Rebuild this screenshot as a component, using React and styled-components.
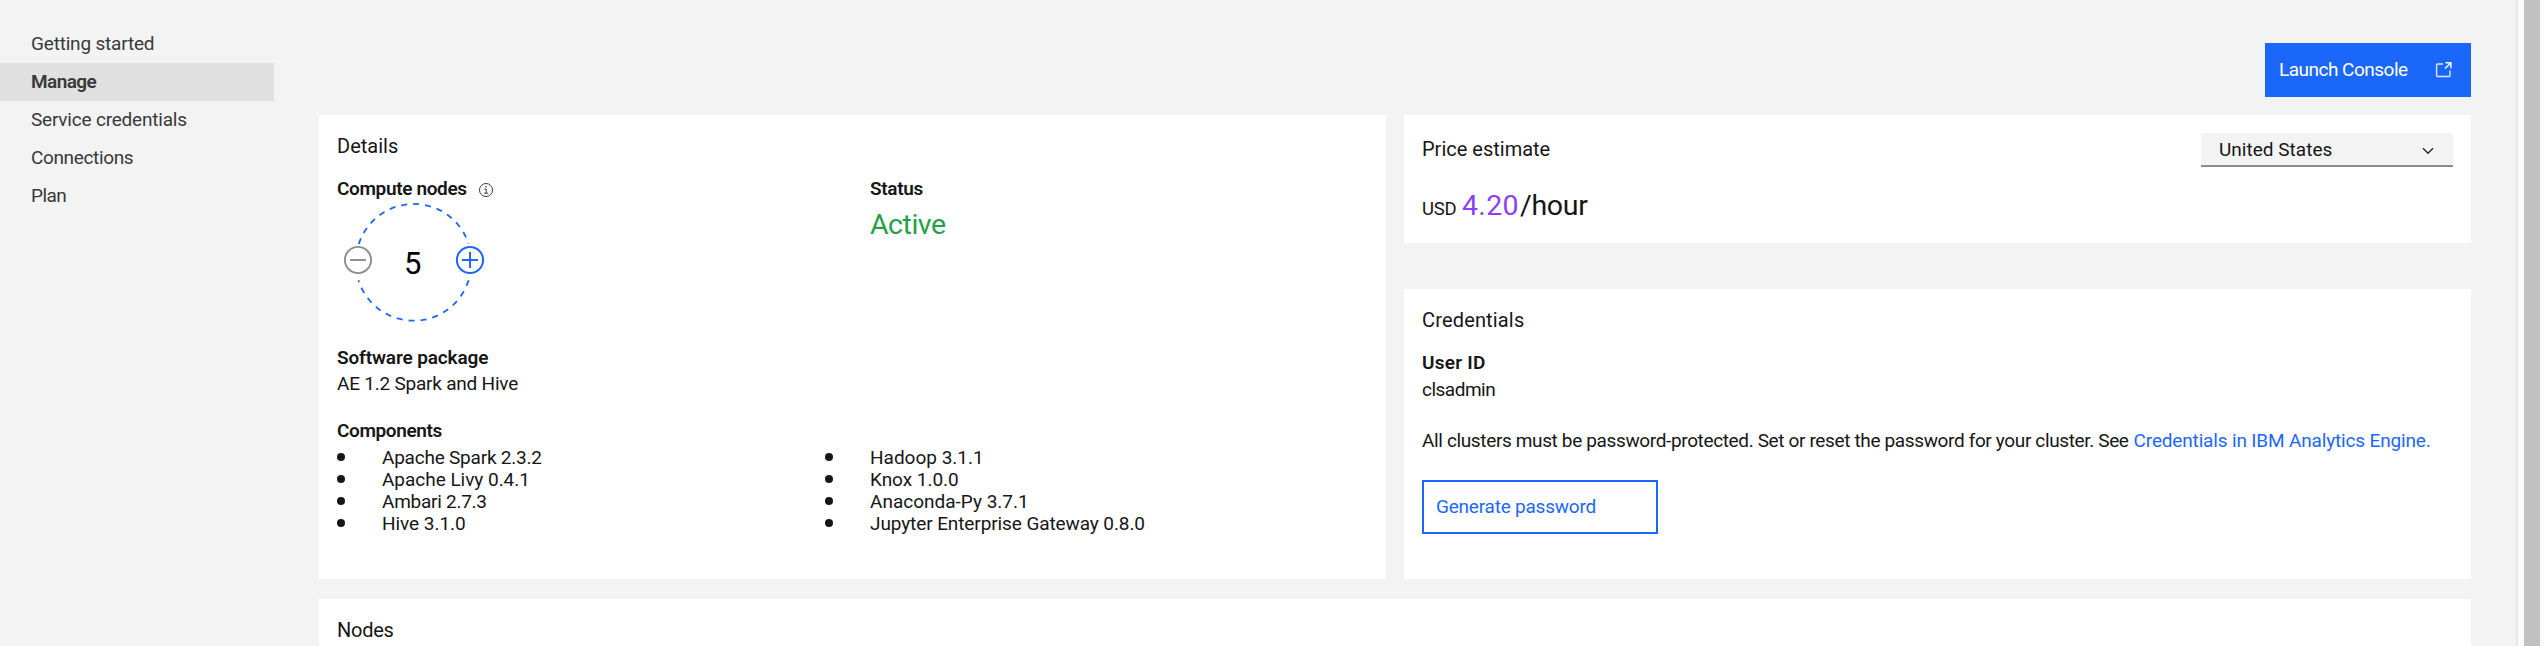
import React from "react";
import styled, { createGlobalStyle } from "styled-components";

const GlobalStyle = createGlobalStyle`
  * { box-sizing: border-box; }
  body {
    margin: 0;
    background: #f3f3f3;
    overflow: hidden;
  }
  button { font: inherit; }
`;

const Page = styled.div`
  display: flex;
  height: 646px;
  overflow: hidden;
  color: #161616;
  font-family: Roboto, "Liberation Sans", sans-serif;
  font-size: 19px;
  line-height: 24px;
  white-space: nowrap;
`;

const SideNav = styled.nav`
  flex: none;
  width: 274px;
  padding-top: 25px;
`;

const NavItem = styled.a`
  display: block;
  height: 38px;
  padding-left: 31px;
  line-height: 38px;
  color: #393939;
  background: ${(p) => (p.$active ? "#e0e0e0" : "transparent")};
  font-weight: ${(p) => (p.$active ? 600 : 400)};
  letter-spacing: ${(p) => p.$tracking}px;
`;

const Main = styled.main`
  flex: 1;
  display: flex;
  flex-direction: column;
  padding: 43px 45px 0 45px;
`;

const Toolbar = styled.div`
  display: flex;
  justify-content: flex-end;
  margin-bottom: 18px;
`;

const PrimaryButton = styled.button`
  display: flex;
  align-items: center;
  justify-content: space-between;
  width: 206px;
  height: 54px;
  padding: 0 18px 0 14px;
  border: 0;
  color: #fff;
  background: #1c67fb;
  letter-spacing: -0.51px;
`;

const OutlineButton = styled.button`
  display: flex;
  align-items: center;
  width: 236px;
  height: 54px;
  margin-top: 27px;
  padding: 0 0 0 12px;
  border: 2px solid #1c67fb;
  color: #1c67fb;
  background: #fff;
  letter-spacing: -0.22px;
`;

const CardGrid = styled.div`
  display: grid;
  grid-template-columns: 1067px 1067px;
  column-gap: 18px;
  height: 464px;
  margin-bottom: 20px;
`;

const Stack = styled.div`
  display: flex;
  flex-direction: column;
  gap: 46px;
`;

const Card = styled.section`
  padding: 19px 18px 0;
  background: #fff;
  ${(p) => p.$fill && "flex: 1;"}
`;

const PriceCard = styled(Card)`
  height: 128px;
  padding-top: 18px;
`;

const CardTitle = styled.h2`
  margin: 0;
  font-size: 20px;
  font-weight: 400;
  line-height: ${(p) => p.$line || 24}px;
  letter-spacing: ${(p) => p.$tracking}px;
`;

const Columns = styled.div`
  display: grid;
  grid-template-columns: 533px 1fr;
  margin-top: ${(p) => p.$top}px;
`;

const Label = styled.h3`
  display: flex;
  align-items: center;
  margin: ${(p) => p.$top || 0}px 0 0;
  font-size: 19px;
  font-weight: 600;
  line-height: 24px;
  letter-spacing: ${(p) => p.$tracking}px;
`;

const Value = styled.p`
  margin: ${(p) => (p.$top ?? 2)}px 0 0;
  letter-spacing: ${(p) => p.$tracking}px;
`;

const StatusValue = styled.p`
  margin: 6px 0 0;
  color: #24a148;
  font-size: 28.5px;
  line-height: 36px;
  letter-spacing: -0.48px;
`;

const InfoIcon = styled.svg`
  margin: 2px 0 0 11px;
`;

const Dial = styled.svg`
  display: block;
  margin-top: -1px;
`;

const DialNumber = styled.text`
  font-size: 31px;
  fill: #000;
`;

const ComponentList = styled.ul`
  margin: 0;
  padding: 0;
  list-style: none;
  line-height: 22px;
`;

const ComponentItem = styled.li`
  display: flex;
  letter-spacing: ${(p) => p.$tracking}px;

  &::before {
    content: "";
    flex: none;
    width: 8px;
    height: 8px;
    margin: 6px 37px 0 0;
    border-radius: 50%;
    background: #161616;
  }
`;

const ComponentColumns = styled.div`
  display: grid;
  grid-template-columns: 488px 1fr;
  margin-top: 4px;
`;

const PriceHeader = styled.div`
  display: flex;
  justify-content: space-between;
`;

const Select = styled.div`
  display: flex;
  justify-content: space-between;
  width: 252px;
  height: 34px;
  padding: 0 19px 0 18px;
  border-bottom: 2px solid #8d8d8d;
  background: #f3f3f3;
  line-height: 34px;
  letter-spacing: 0.02px;
`;

const Chevron = styled.svg`
  margin-top: 14px;
`;

const PriceLine = styled.p`
  display: flex;
  align-items: baseline;
  margin: 21px 0 0;
  line-height: 36px;
`;

const Currency = styled.span`
  width: 40px;
  font-size: 18.5px;
  letter-spacing: -0.2px;
`;

const Amount = styled.span`
  width: 58px;
  color: #8a3ffc;
  font-size: 28.5px;
  letter-spacing: 0.32px;
`;

const Unit = styled.span`
  font-size: 28.5px;
  letter-spacing: -0.3px;
`;

const Link = styled.a`
  margin-left: 5px;
  color: #1c67fb;
  letter-spacing: -0.16px;
`;

const ScrollTrack = styled.div`
  flex: none;
  width: 28px;
  padding: 0 4px 0 6px;
  border-left: 2px solid #e8e8e8;
  background: #fafafa;
`;

const ScrollThumb = styled.div`
  height: 100%;
  background: #c1c1c1;
`;

const NAV = [
  { text: "Getting started", tracking: -0.19 },
  { text: "Manage", tracking: -0.57, active: true },
  { text: "Service credentials", tracking: -0.2 },
  { text: "Connections", tracking: -0.36 },
  { text: "Plan", tracking: -0.55 },
];

const LEFT_COMPONENTS = [
  ["Apache Spark 2.3.2", -0.22],
  ["Apache Livy 0.4.1", -0.03],
  ["Ambari 2.7.3", -0.26],
  ["Hive 3.1.0", -0.05],
];

const RIGHT_COMPONENTS = [
  ["Hadoop 3.1.1", 0],
  ["Knox 1.0.0", -0.04],
  ["Anaconda-Py 3.7.1", 0],
  ["Jupyter Enterprise Gateway 0.8.0", -0.1],
];

function Components({ items }) {
  return (
    <ComponentList>
      {items.map(([name, tracking]) => (
        <ComponentItem key={name} $tracking={tracking}>
          {name}
        </ComponentItem>
      ))}
    </ComponentList>
  );
}

function NodeDial() {
  return (
    <Dial width="150" height="124" viewBox="0 0 150 124" fill="none">
      <g stroke="#1c67fb" strokeWidth="1.8" strokeDasharray="6 6">
        <path d="M21.8 44A57.7 57.7 0 0 1 131.5 43.5" />
        <path d="M131.6 80.3A57.7 57.7 0 0 1 21.5 80.3" />
      </g>
      <g stroke="#8d8d8d" strokeWidth="1.9">
        <circle cx="21" cy="60" r="13.1" />
        <path d="M13 60H29" />
      </g>
      <g stroke="#1c67fb" strokeWidth="2">
        <circle cx="133" cy="60" r="13.1" />
        <path d="M125 60H141M133 52V68" />
      </g>
      <DialNumber x="67" y="73.7">5</DialNumber>
    </Dial>
  );
}

export default function App() {
  return (
    <Page>
      <GlobalStyle />
      <SideNav>
        {NAV.map((n) => (
          <NavItem key={n.text} $active={n.active} $tracking={n.tracking}>
            {n.text}
          </NavItem>
        ))}
      </SideNav>

      <Main>
        <Toolbar>
          <PrimaryButton>
            Launch Console
            <svg width="18" height="18" viewBox="0 0 18 18" fill="none" stroke="#fff" strokeWidth="1.4">
              <path d="M8 3H2.6Q1.6 3 1.6 4V14.5Q1.6 15.5 2.6 15.5H14Q15 15.5 15 14.5V9.5" opacity="0.85" />
              <path d="M10.5 1.7H15.9V7.2M15.9 1.7L10 7.6" />
            </svg>
          </PrimaryButton>
        </Toolbar>

        <CardGrid>
          <Card>
            <CardTitle $tracking={0.02}>Details</CardTitle>
            <Columns $top={19}>
              <div>
                <Label $tracking={-0.36}>
                  Compute nodes
                  <InfoIcon width="16" height="16" viewBox="0 0 16 16" fill="none" stroke="#3d3d3d">
                    <circle cx="8" cy="8" r="6.5" />
                    <path d="M6.3 7H8.2V11M6 11.2H10.2" />
                    <circle cx="8" cy="4.7" r="0.8" fill="#3d3d3d" stroke="none" />
                  </InfoIcon>
                </Label>
                <NodeDial />
              </div>
              <div>
                <Label $tracking={-0.33}>Status</Label>
                <StatusValue>Active</StatusValue>
              </div>
            </Columns>
            <Label $top={22} $tracking={-0.13}>Software package</Label>
            <Value $tracking={-0.22}>AE 1.2 Spark and Hive</Value>
            <Label $top={23} $tracking={-0.38}>Components</Label>
            <ComponentColumns>
              <Components items={LEFT_COMPONENTS} />
              <Components items={RIGHT_COMPONENTS} />
            </ComponentColumns>
          </Card>

          <Stack>
            <PriceCard>
              <PriceHeader>
                <CardTitle $line={32} $tracking={0}>Price estimate</CardTitle>
                <Select>
                  United States
                  <Chevron width="12" height="8" viewBox="0 0 12 8" fill="none" stroke="#262626" strokeWidth="1.4">
                    <path d="M1 1.3L6 6.2L11 1.3" />
                  </Chevron>
                </Select>
              </PriceHeader>
              <PriceLine>
                <Currency>USD</Currency>
                <Amount>4.20</Amount>
                <Unit>/hour</Unit>
              </PriceLine>
            </PriceCard>

            <Card $fill>
              <CardTitle $tracking={0.16}>Credentials</CardTitle>
              <Label $top={19} $tracking={0.25}>User ID</Label>
              <Value $top={3} $tracking={-0.5}>clsadmin</Value>
              <Value $top={27} $tracking={-0.36}>
                All clusters must be password-protected. Set or reset the password for your cluster. See
                <Link>Credentials in IBM Analytics Engine.</Link>
              </Value>
              <OutlineButton>Generate password</OutlineButton>
            </Card>
          </Stack>
        </CardGrid>

        <Card $fill>
          <CardTitle $tracking={-0.26}>Nodes</CardTitle>
        </Card>
      </Main>

      <ScrollTrack>
        <ScrollThumb />
      </ScrollTrack>
    </Page>
  );
}
